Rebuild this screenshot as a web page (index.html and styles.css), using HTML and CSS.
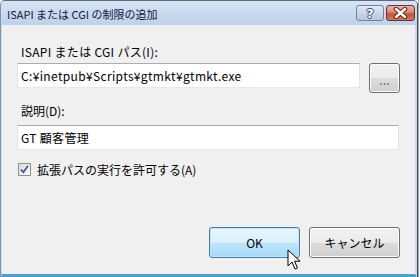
FILE: index.html
```html
<!DOCTYPE html>
<html lang="ja">
<head>
    <meta charset="UTF-8">
    <title>ISAPI または CGI の制限の追加</title>
    <link rel="stylesheet" href="styles.css">
</head>
<body>
    <div class="desktop">
        <div class="window">
            <div class="titlebar">
                <span class="title">ISAPI または CGI の制限の追加</span>
                <div class="caption-buttons">
                    <div class="cap-btn help">?</div>
                    <div class="cap-btn close">
                        <svg width="17" height="12" viewBox="0 0 17 12">
                            <path d="M1 6 H16" stroke="#e08a3a" stroke-width="1" stroke-dasharray="1 1"/>
                            <path d="M4 2 L13 10 M13 2 L4 10" stroke="#5a2a22" stroke-width="4.5" stroke-linecap="round"/>
                            <path d="M4 2 L13 10 M13 2 L4 10" stroke="#ffffff" stroke-width="2.4" stroke-linecap="round"/>
                        </svg>
                    </div>
                </div>
            </div>
            <div class="client">
                <div class="label wide">ISAPI または CGI パス(I):</div>
                <div class="path-row">
                    <div class="textbox path">C:¥inetpub¥Scripts¥gtmkt¥gtmkt.exe</div>
                    <button class="btn browse">...</button>
                </div>
                <div class="label second">説明(D):</div>
                <div class="textbox desc">GT 顧客管理</div>
                <label class="check-row">
                    <span class="checkbox">
                        <svg width="11" height="11" viewBox="0 0 11 11">
                            <path d="M2 5.5 L4.3 8.2 L9 1.8" fill="none" stroke="#4a5c9a" stroke-width="1.8"/>
                        </svg>
                    </span>
                    <span>拡張パスの実行を許可する(A)</span>
                </label>
                <div class="actions">
                    <button class="btn ok">OK</button>
                    <button class="btn">キャンセル</button>
                </div>
                <svg class="cursor" width="14" height="22" viewBox="0 0 14 22">
                    <path d="M1 1 L1 17 L5 13 L8 20 L10.5 19 L7.5 12.2 L13 12.2 Z" fill="#ffffff" stroke="#000000" stroke-width="1" stroke-linejoin="miter"/>
                </svg>
            </div>
        </div>
        <div class="behind"></div>
    </div>
</body>
</html>
```

FILE: styles.css
```css
body {
    margin: 0;
    background: #ffffff;
    font-family: "Noto Sans CJK JP", sans-serif;
    font-size: 12px;
    color: #000000;
}

.desktop {
    display: flex;
    width: 420px;
    height: 277px;
    overflow: hidden;
}

.window {
    width: 416px;
    height: 276px;
    flex: none;
    display: flex;
    flex-direction: column;
    border-top: 1px solid #5a6b80;
    border-left: 1px solid #7f93ab;
    border-right: 1px solid #3f4a58;
    border-top-left-radius: 5px;
    border-top-right-radius: 5px;
    background: #c3d6ec;
}

.behind {
    flex: 1;
    background: #ffffff;
    border-left: 1px solid #9aa7b6;
}

.titlebar {
    height: 24px;
    display: flex;
    align-items: center;
    justify-content: space-between;
    padding-left: 6px;
    padding-right: 2px;
    background: linear-gradient(#d7e4f4, #bcd1ea);
    border-top-left-radius: 4px;
    border-top-right-radius: 4px;
}

.title {
    color: #14143c;
    font-size: 11px;
    padding-top: 1px;
}

.caption-buttons {
    display: flex;
    gap: 2px;
    align-self: flex-start;
    margin-top: 4px;
}

.cap-btn {
    height: 14px;
    border-radius: 3px;
    display: flex;
    align-items: center;
    justify-content: center;
}

.help {
    width: 26px;
    border: 1px solid #6f83a0;
    background: linear-gradient(#e3ebf5, #c6d5e8 50%, #b6c8e0);
    color: #ffffff;
    font-family: "DejaVu Sans", sans-serif;
    font-weight: bold;
    font-size: 13px;
    text-shadow: 1px 0 0 #3b4b66, -1px 0 0 #3b4b66, 0 1px 0 #3b4b66, 0 -1px 0 #3b4b66;
}

.close {
    width: 27px;
    border: 1px solid #6e3028;
    background: linear-gradient(#e8b3a6, #d98774 45%, #c4533b 55%, #cf7a5c);
}

.client {
    flex: 1;
    position: relative;
    background: #f0f0f0;
    border-left: 1px solid #c9dbef;
    border-right: 2px solid #c9dbef;
    border-bottom: 3px solid #4aa0d4;
    padding: 19px 15px 0 15px;
}

.label {
    padding-left: 4px;
    line-height: 16px;
    height: 16px;
}

.label.wide {
    letter-spacing: 0.3px;
}

.label.second {
    margin-top: 10px;
}

.path-row {
    display: flex;
    align-items: flex-start;
    gap: 9px;
    margin-top: 3px;
}

.textbox {
    height: 23px;
    line-height: 23px;
    padding-left: 3px;
    background: #ffffff;
    border: 1px solid #e2e3ea;
    border-top-color: #abadb3;
    border-bottom-color: #e3e9ef;
    box-sizing: content-box;
    white-space: nowrap;
    overflow: hidden;
}

.path {
    width: 338px;
    letter-spacing: 0.35px;
}

.desc {
    width: 377px;
    margin-top: 6px;
    letter-spacing: 0.3px;
}

.btn {
    font-family: "Noto Sans CJK JP", sans-serif;
    font-size: 12px;
    color: #000000;
    border: 1px solid #707070;
    border-radius: 3px;
    background: linear-gradient(#f2f2f2, #ebebeb 50%, #dddddd 50%, #cfcfcf);
    box-shadow: inset 0 0 0 1px #fcfcfc;
    padding: 0;
}

.browse {
    width: 31px;
    height: 30px;
    color: #8a5a00;
    font-size: 13px;
    line-height: 22px;
    padding-top: 4px;
}

.check-row {
    display: flex;
    align-items: center;
    gap: 6px;
    margin-top: 12px;
    padding-left: 1px;
    height: 14px;
}

.checkbox {
    width: 11px;
    height: 11px;
    border: 1px solid #8e8f8f;
    background: linear-gradient(135deg, #dcdcdc, #fbfbfb);
    display: flex;
}

.actions {
    display: flex;
    justify-content: flex-end;
    gap: 9px;
    margin-top: 51px;
}

.actions .btn {
    width: 91px;
    height: 31px;
}

.actions .ok {
    border-color: #3c7fb1;
    background: linear-gradient(#eaf6fd, #d9f0fc 50%, #bee6fd 50%, #a7d9f5);
    box-shadow: inset 0 0 0 1px #c4e5f6;
}

.cursor {
    position: absolute;
    left: 285px;
    top: 224px;
}
```
